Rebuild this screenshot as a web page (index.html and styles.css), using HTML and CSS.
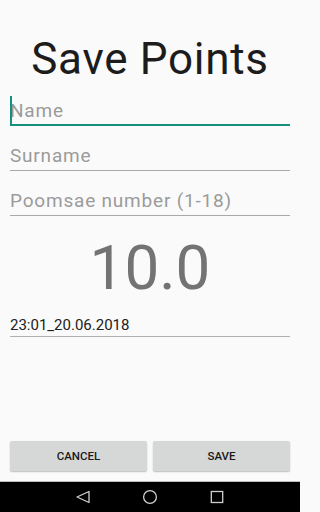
FILE: index.html
```html
<!DOCTYPE html>
<html>
<head>
<meta charset="utf-8">
<link rel="stylesheet" href="styles.css">
</head>
<body>
<div class="screen">
  <h1 class="title">Save Points</h1>
  <div class="fields">
    <div class="field field--focused"><span class="cursor"></span><span class="hint">Name</span></div>
    <div class="field"><span class="hint">Surname</span></div>
    <div class="field"><span class="hint">Poomsae number (1-18)</span></div>
  </div>
  <div class="score">10.0</div>
  <div class="date">23:01_20.06.2018</div>
  <div class="spacer"></div>
  <div class="actions">
    <button class="btn">CANCEL</button>
    <button class="btn">SAVE</button>
  </div>
  <nav class="navbar">
    <svg class="nav-icon" width="20" height="20" viewBox="0 0 20 20"><polygon points="16,4.5 4,10 16,15.5" fill="none" stroke="#cfcfcf" stroke-width="1.3" stroke-linejoin="round"/></svg>
    <svg class="nav-icon" width="20" height="20" viewBox="0 0 20 20"><circle cx="10" cy="10" r="6.4" fill="none" stroke="#cfcfcf" stroke-width="1.3"/></svg>
    <svg class="nav-icon" width="20" height="20" viewBox="0 0 20 20"><rect x="4.3" y="4.5" width="11.4" height="11" fill="none" stroke="#cfcfcf" stroke-width="1.3"/></svg>
  </nav>
</div>
</body>
</html>
```

FILE: styles.css
```css
html, body {
  margin: 0;
  padding: 0;
  background: #fafafa;
}
.screen {
  width: 300px;
  height: 512px;
  display: flex;
  flex-direction: column;
  font-family: Roboto, "Liberation Sans", sans-serif;
}
.title {
  margin: 0;
  padding-top: 34px;
  font-size: 44px;
  line-height: 50px;
  font-weight: 400;
  letter-spacing: 0.7px;
  color: #1c1c1c;
  text-align: center;
}
.fields {
  display: flex;
  flex-direction: column;
  gap: 18px;
  padding: 15px 10px 0;
}
.field {
  position: relative;
  font-size: 19px;
  line-height: 24px;
  letter-spacing: 0.8px;
  padding-bottom: 2px;
  border-bottom: 1px solid #a8a8a8;
}
.field--focused {
  padding-bottom: 1px;
  border-bottom: 2px solid #14907f;
}
.hint {
  color: #9b9b9b;
}
.cursor {
  position: absolute;
  left: 0;
  top: -3px;
  width: 1.5px;
  height: 29px;
  background: #14907f;
}
.score {
  margin-top: 17px;
  font-size: 62px;
  line-height: 70px;
  color: #737373;
  text-align: center;
}
.date {
  margin: 12px 10px 0;
  font-size: 15px;
  line-height: 20px;
  color: #212121;
  padding-bottom: 1px;
  border-bottom: 1px solid #b0b0b0;
}
.spacer {
  flex: 1;
}
.actions {
  display: flex;
  gap: 6px;
  padding: 0 10px 11px;
}
.btn {
  flex: 1;
  height: 30px;
  border: none;
  border-radius: 2px;
  background: #d6d7d7;
  box-shadow: 0 1px 1.5px rgba(0, 0, 0, 0.25);
  font-family: Roboto, "Liberation Sans", sans-serif;
  font-size: 11.5px;
  font-weight: 500;
  color: #1a1a1a;
  padding: 0;
}
.navbar {
  height: 30px;
  background: #000;
  display: flex;
  justify-content: center;
  align-items: center;
  gap: 47px;
  box-shadow: 0 -1px 0 #bdbdbd;
}
.nav-icon {
  display: block;
}
```
